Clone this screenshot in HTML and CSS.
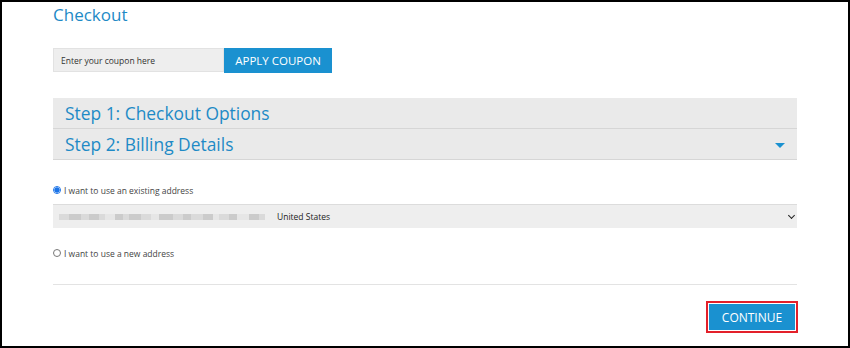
FILE: index.html
```html
<!DOCTYPE html>
<html lang="en">
<head>
    <meta charset="UTF-8">
    <title>Checkout</title>
    <link rel="stylesheet" href="styles.css">
</head>
<body>
    <div class="frame">
        <div class="page">
            <h1 class="title">Checkout</h1>

            <!-- Coupon -->
            <div class="coupon">
                <input class="coupon-input" type="text" placeholder="Enter your coupon here">
                <button class="btn coupon-btn">APPLY COUPON</button>
            </div>

            <!-- Steps -->
            <div class="steps">
                <div class="step">Step 1: Checkout Options</div>
                <div class="step">
                    <span>Step 2: Billing Details</span>
                    <span class="caret"></span>
                </div>
            </div>

            <div class="billing">
                <label class="radio-row">
                    <span class="radio checked"></span>
                    I want to use an existing address
                </label>
                <div class="address-select">
                    <span class="blur">
                        <span class="px w10"></span><span class="px w12 d"></span><span class="px w8"></span><span class="px w10 d"></span><span class="px w6"></span>
                        <span class="px w10 l"></span><span class="px w8 d"></span><span class="px w6"></span><span class="px w12 d"></span><span class="px w10"></span><span class="px w8 l"></span>
                        <span class="px w14 d"></span><span class="px w10"></span><span class="px w8 d"></span><span class="px w12"></span><span class="px w10 d"></span><span class="px w6 l"></span>
                        <span class="px w10"></span><span class="px w8 d"></span><span class="px w12 l"></span><span class="px w10 d"></span><span class="px w6"></span>
                    </span>
                    <span class="country">United States</span>
                    <span class="chevron"></span>
                </div>
                <label class="radio-row new">
                    <span class="radio"></span>
                    I want to use a new address
                </label>
            </div>

            <hr class="divider">

            <div class="actions">
                <div class="highlight">
                    <button class="btn continue-btn">CONTINUE</button>
                </div>
            </div>
        </div>
    </div>
</body>
</html>
```

FILE: styles.css
```css
* {
    margin: 0;
    padding: 0;
    box-sizing: border-box;
    font-family: "Open Sans", Arial, sans-serif;
}

:root {
    --blue: #1e8ac6;
    --btn-bg: #1a91d0;
    --panel-bg: #eaeaea;
    --field-bg: #eeeeee;
}

body {
    background-color: #ffffff;
}

.frame {
    width: 850px;
    height: 348px;
    border: 2px solid #000;
    overflow: hidden;
}

.page {
    width: 744px;
    margin-left: 51px;
}

.title {
    font-size: 17px;
    font-weight: normal;
    color: var(--blue);
    line-height: 24px;
    margin-top: 1px;
}

/* Coupon */
.coupon {
    display: flex;
    margin-top: 21px;
    height: 24px;
}

.coupon-input {
    width: 171px;
    height: 24px;
    background-color: var(--field-bg);
    border: 1px solid #e2e2e2;
    padding-left: 7px;
    font-size: 8.5px;
    color: #333;
}

.coupon-input::placeholder {
    color: #333;
}

.btn {
    background-color: var(--btn-bg);
    color: #fff;
    border: none;
    cursor: pointer;
    font-size: 12px;
}

.coupon-btn {
    width: 108px;
    height: 25px;
    font-size: 11.5px;
}

/* Steps */
.steps {
    margin-top: 26px;
}

.step {
    display: flex;
    justify-content: space-between;
    align-items: center;
    height: 31px;
    background-color: var(--panel-bg);
    border-bottom: 1px solid #d6d6d6;
    padding: 0 12px;
    font-size: 17.4px;
    color: var(--blue);
}

.caret {
    width: 0;
    height: 0;
    border-left: 5px solid transparent;
    border-right: 5px solid transparent;
    border-top: 5px solid var(--btn-bg);
    margin-top: 2px;
}

/* Billing */
.billing {
    padding-top: 24px;
}

.radio-row {
    display: flex;
    align-items: center;
    gap: 3px;
    font-size: 8.5px;
    color: #444;
    height: 12px;
}

.radio {
    width: 8px;
    height: 8px;
    border-radius: 50%;
    border: 1px solid #777;
    display: inline-block;
}

.radio.checked {
    border: 1px solid #1a73e8;
    background: radial-gradient(circle, #1a73e8 0 2.4px, #fff 2.8px);
}

.address-select {
    display: flex;
    align-items: center;
    height: 24px;
    margin-top: 8px;
    background-color: var(--field-bg);
    border-top: 1px solid #dcdcdc;
    padding-left: 6px;
    font-size: 8.5px;
    color: #222;
}

.blur {
    display: flex;
    align-items: center;
    width: 218px;
    height: 8px;
    overflow: hidden;
}

.px {
    height: 6px;
    background-color: #dadada;
}

.px.d {
    background-color: #cbcbcb;
}

.px.l {
    background-color: #e6e6e6;
}

.w6 { width: 6px; }
.w8 { width: 8px; }
.w10 { width: 10px; }
.w12 { width: 12px; }
.w14 { width: 14px; }

.country {
    flex: 1;
}

.chevron {
    width: 5px;
    height: 5px;
    border-right: 1.5px solid #222;
    border-bottom: 1.5px solid #222;
    transform: rotate(45deg);
    margin-right: 3px;
    margin-top: -3px;
}

.radio-row.new {
    margin-top: 19px;
}

.divider {
    border: none;
    border-top: 1px solid #e3e3e3;
    margin-top: 25px;
}

.actions {
    display: flex;
    justify-content: flex-end;
    margin-top: 16px;
    margin-right: -1px;
}

.highlight {
    border: 2px solid #e3202a;
    padding: 1px;
}

.continue-btn {
    width: 86px;
    height: 26px;
}
```
